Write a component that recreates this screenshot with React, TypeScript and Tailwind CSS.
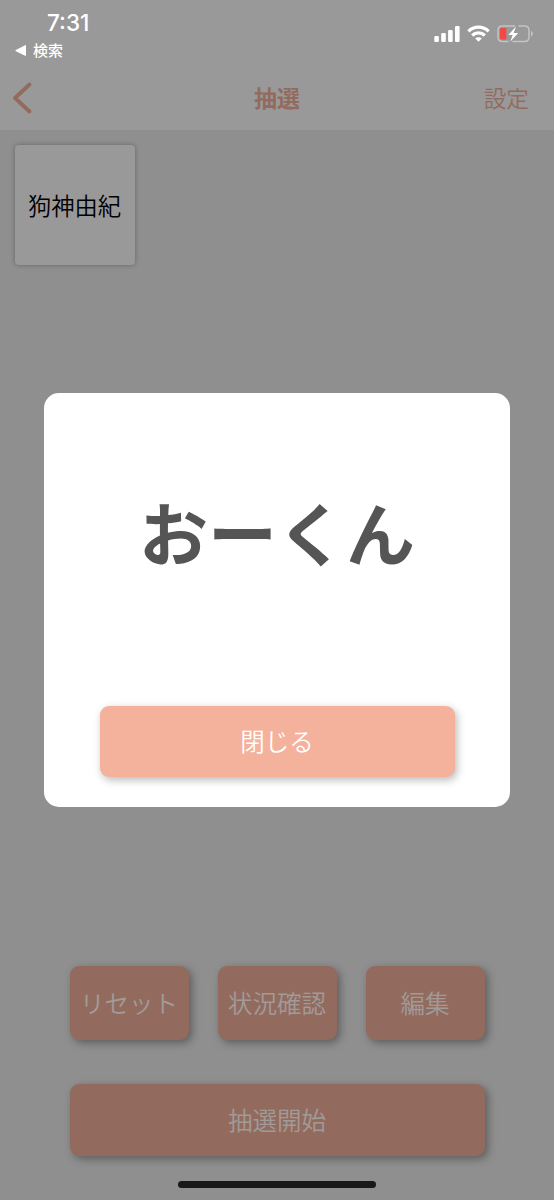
import React from 'react';

const actions = ['リセット', '状況確認', '編集'];

function StatusBar() {
  return (
    <div className="h-[65px] flex justify-between text-white">
      <div className="pl-[15px] pt-[9px]">
        <p className="pl-8 font-[Inter,sans-serif] text-[22.500px] leading-[28px] font-medium">7:31</p>
        <div className="flex items-center gap-[7px] mt-[3px]">
          <svg width="11" height="11" viewBox="0 0 11 11" fill="currentColor">
            <path d="M11 .7v9.600c0 .5-.4.7-.8.500L.8 6.200c-.5-.3-.5-.9 0-1.200L10.200.2c.4-.2.8 0 .8.500z" />
          </svg>
          <span className="text-[15px] leading-[20px] font-medium">検索</span>
        </div>
      </div>
      <div className="flex items-start pt-[25px] pr-[21px]">
        <svg width="26" height="18" viewBox="0 0 26 18" fill="currentColor">
          <rect x="0.300" y="11" width="4.600" height="6" rx="1.200" />
          <rect x="7.200" y="8" width="4.600" height="9" rx="1.200" />
          <rect x="14.100" y="5" width="4.600" height="12" rx="1.200" />
          <rect x="21" y="1" width="4.600" height="16" rx="1.200" />
        </svg>
        <svg className="ml-[7px]" width="23" height="18" viewBox="0 0 23 18" fill="none" stroke="currentColor" strokeWidth="3.200">
          <path d="M1.400 6.300a14.400 14.400 0 0 1 20.200 0" />
          <path d="M5.200 10.500a8.900 8.900 0 0 1 12.600 0" />
          <path d="M11.500 16.800l-3.300-3.300a4.700 4.700 0 0 1 6.600 0z" fill="currentColor" stroke="none" />
        </svg>
        <svg className="ml-[7px]" width="36" height="18" viewBox="0 0 36 18" fill="none">
          <path
            d="M18 1H5.500C2.500 1 1 2.500 1 5.500v6.500C1 15 2.500 16.500 5.500 16.500H11.500M21.500 1h6C30.500 1 32 2.500 32 5.500v6.500c0 3-1.500 4.500-4.500 4.500H15.500"
            stroke="#c4c4c4"
            strokeWidth="1.500"
          />
          <path d="M34 6v5.500c1.200-.5 1.800-1.500 1.800-2.750S35.200 6.500 34 6z" fill="#c4c4c4" />
          <path d="M5 3h4.300v11.500H5c-1.400 0-2-.6-2-2V5c0-1.400.6-2 2-2z" fill="#f24a43" />
          <path d="M19 1.500L11.300 10h4.400l-2.500 6.800 8-8.800h-4.600z" fill="white" />
        </svg>
      </div>
    </div>
  );
}

function NavBar() {
  return (
    <div className="h-[65px] grid grid-cols-3 items-center text-[#936b5e]">
      <svg className="ml-[12px]" width="21" height="34" viewBox="0 0 21 34" fill="none">
        <path d="M17.500 3.500L3 17l14.500 13.500" stroke="currentColor" strokeWidth="3.800" strokeLinecap="round" strokeLinejoin="round" />
      </svg>
      <h1 className="text-center text-[23px] leading-none font-bold">抽選</h1>
      <span className="pt-px pr-[25px] text-right text-[22.700px] leading-none font-[350]">設定</span>
    </div>
  );
}

function ResultModal() {
  return (
    <div className="absolute left-[44px] top-[393px] w-[466px] h-[414px] rounded-[15px] bg-white flex flex-col items-center">
      <p className="mt-[102px] text-[69px] leading-[72px] font-bold text-[#555555]">おーくん</p>
      <button className="mt-[139px] w-[355px] h-[71px] rounded-[9px] bg-[#f4b19b] text-white text-[24.500px] font-[350] shadow-[2px_3px_8px_rgba(0,0,0,0.28)]">
        閉じる
      </button>
    </div>
  );
}

export default function App() {
  return (
    <main className="relative w-[554px] h-[1200px] overflow-hidden flex flex-col bg-[#8f8f8f] font-['Noto_Sans_CJK_JP',sans-serif]">
      <header className="bg-[#999999]">
        <StatusBar />
        <NavBar />
      </header>

      {/* Remaining entries */}
      <section className="flex-1 p-[15px]">
        <div className="size-[120px] rounded-[4px] bg-[#999999] flex items-center justify-center pr-px text-[23.300px] font-[350] text-black shadow-[0_0_5px_rgba(0,0,0,0.3)]">
          狗神由紀
        </div>
      </section>

      {/* Controls */}
      <footer className="pl-[70px] pr-[69px] text-[24.500px] font-[350] text-[#a09b99]">
        <div className="grid grid-cols-3 gap-[29px]">
          {actions.map((label) => (
            <button key={label} className="h-[74px] pr-px rounded-[9px] bg-[#936b5e] whitespace-nowrap shadow-[3px_3px_8px_rgba(0,0,0,0.35)]">
              {label}
            </button>
          ))}
        </div>
        <button className="mt-[44px] w-full h-[72px] pr-px rounded-[9px] bg-[#936b5e] shadow-[3px_3px_8px_rgba(0,0,0,0.35)]">
          抽選開始
        </button>
        <div className="ml-[108px] mt-[25px] mb-[12px] w-[198px] h-[7px] rounded-full bg-[#191919]" />
      </footer>

      <ResultModal />
    </main>
  );
}
